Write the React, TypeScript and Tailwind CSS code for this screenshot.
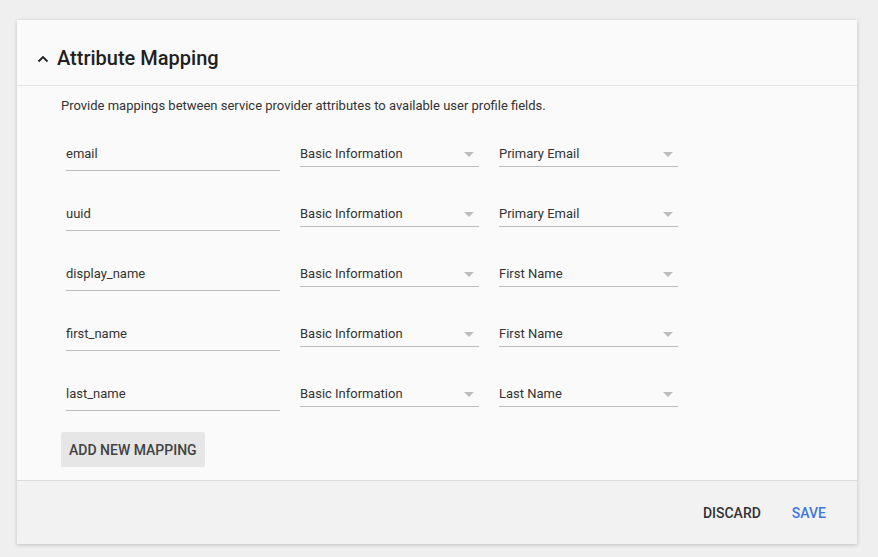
import React from "react";

const rows = [
  { attr: "email", group: "Basic Information", field: "Primary Email" },
  { attr: "uuid", group: "Basic Information", field: "Primary Email" },
  { attr: "display_name", group: "Basic Information", field: "First Name" },
  { attr: "first_name", group: "Basic Information", field: "First Name" },
  { attr: "last_name", group: "Basic Information", field: "Last Name" },
];

const Select = ({ value, width }: { value: string; width: string }) => (
  <div className={`${width} flex items-center justify-between pt-[7px] pb-[2px] border-b border-[#bdbdbd]`}>
    <span className="text-[13px] leading-5 text-[#333]">{value}</span>
    <svg width="10" height="5" viewBox="0 0 10 5" className="mr-[5px]">
      <path d="M0 0 L10 0 L5 5 Z" fill="#bdbdbd" />
    </svg>
  </div>
);

export default function App() {
  return (
    <div className="min-h-[557px] bg-[#efefef] pt-5 pl-[17px] pr-[21px] pb-[13px]" style={{ fontFamily: "Roboto, 'Liberation Sans', sans-serif" }}>
      <div className="w-[840px] bg-[#fafafa] shadow-[0_1px_4px_rgba(0,0,0,0.2)]">
        <div className="h-[66px] flex items-center pl-5 pt-[11px] border-b border-[#e4e4e4]">
          <svg width="12" height="8" viewBox="0 0 12 8" className="mr-[8px] mt-[1px]">
            <path d="M1.5 6.5 L6 2 L10.5 6.5" stroke="#212121" strokeWidth="1.8" fill="none" />
          </svg>
          <h2 className="text-[20px] leading-7 font-medium text-[#212121]">Attribute Mapping</h2>
        </div>
        <div className="flex flex-col pl-[44px] pt-[10px] pb-[13px]">
          <p className="text-[13px] leading-5 text-[#333]">
            Provide mappings between service provider attributes to available user profile fields.
          </p>
          <div className="flex flex-col mt-[21px] gap-[26px] pl-[5px]">
            {rows.map((row) => (
              <div key={row.attr} className="flex items-start gap-5">
                <div className="w-[214px] pt-[7px] pb-[6px] border-b border-[#bdbdbd] text-[13px] leading-5 text-[#333]">
                  {row.attr}
                </div>
                <Select value={row.group} width="w-[179px]" />
                <Select value={row.field} width="w-[179px]" />
              </div>
            ))}
          </div>
          <div className="mt-[21px]">
            <button className="h-[35px] px-2 pt-[1px] rounded-[2px] bg-[#e6e6e6] text-[14px] font-medium text-[#424242] uppercase">
              Add new mapping
            </button>
          </div>
        </div>
        <div className="h-[64px] flex items-center justify-end gap-[15px] pr-[23px] pt-[1px] bg-[#f2f2f2] border-t border-[#dcdcdc]">
          <button className="px-2 py-2 text-[14px] font-medium text-[#333] uppercase">Discard</button>
          <button className="px-2 py-2 text-[14px] font-medium text-[#3f78e0] uppercase">Save</button>
        </div>
      </div>
    </div>
  );
}
